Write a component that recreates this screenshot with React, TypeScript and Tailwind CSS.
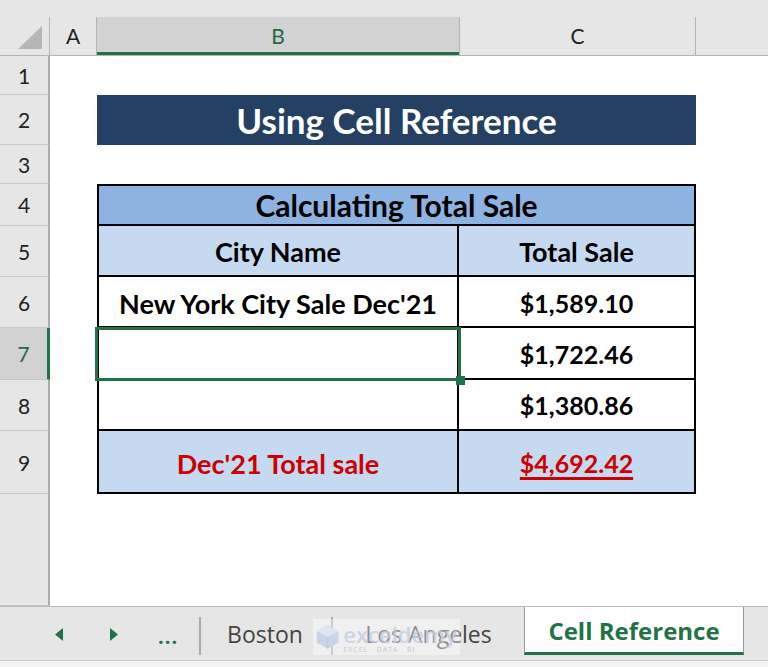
import React, { ReactNode } from "react";

const GREEN = "#217346";

const Row = ({
  n,
  h,
  active,
  children,
}: {
  n: number | string;
  h: string;
  active?: boolean;
  children?: ReactNode;
}) => (
  <div className={`${h} flex overflow-visible`}>
    <div
      className={`h-full w-[50px] shrink-0 flex items-center justify-center border-b border-[#c6c6c6] text-[21px] leading-none ${
        active
          ? "bg-[#d2d2d2] border-r-[3px] border-r-[#217346] text-[#1f6a42]"
          : "bg-[#e6e6e6] border-r-2 border-r-[#acacac] text-[#222]"
      }`}
    >
      {n}
    </div>
    <div className="flex-1 h-full bg-white pl-[47px] relative leading-none">{children}</div>
  </div>
);

const Tri = ({ dir }: { dir: "l" | "r" }) => (
  <svg width="8" height="13" viewBox="0 0 8 13">
    {dir === "l" ? <path d="M8 0 L8 13 L0 6.5 Z" fill={GREEN} /> : <path d="M0 0 L0 13 L8 6.5 Z" fill={GREEN} />}
  </svg>
);

export default function App() {
  return (
    <div className="w-[768px] h-[667px] overflow-hidden bg-[#e6e6e6] [font-family:Lato,'Liberation_Sans',sans-serif] relative">
      {/* top strip */}
      <div className="h-[17px] bg-[#e6e6e6]" />

      {/* column headers */}
      <div className="h-[39px] flex border-b border-[#b4b4b4] text-[21px] text-[#222]">
        <div className="w-[50px] shrink-0 border-r border-[#b4b4b4] flex items-end justify-end pr-[7px] pb-[6px]">
          <svg width="24" height="23" viewBox="0 0 24 23">
            <path d="M24 0 L24 23 L0 23 Z" fill="#b6b6b6" />
          </svg>
        </div>
        <div className="w-[47px] shrink-0 border-r border-[#b4b4b4] flex items-center justify-center">A</div>
        <div className="w-[362px] shrink-0 bg-[#d2d2d2] border-b-[3px] border-[#217346] flex items-center justify-center text-[#1f6a42] pt-[3px]">
          B
        </div>
        <div className="w-[237px] shrink-0 border-x border-[#b4b4b4] flex items-center justify-center">C</div>
        <div className="flex-1" />
      </div>

      {/* sheet rows */}
      <div className="flex flex-col">
        <Row n={1} h="h-[39px]" />

        <Row n={2} h="h-[50px]">
          <div className="w-[599px] h-full bg-[#244062] flex items-center justify-center text-white font-bold text-[35px]">
            Using Cell Reference
          </div>
        </Row>

        <Row n={3} h="h-[39px]" />

        <Row n={4} h="h-[42px]">
          <div className="w-[599px] h-full bg-[#8db3e2] border-2 border-black flex items-center justify-center font-bold text-[30px] text-black">
            Calculating Total Sale
          </div>
        </Row>

        <Row n={5} h="h-[51px]">
          <div className="w-[599px] h-full bg-[#c5d9f1] border-x-2 border-b-2 border-black flex font-bold text-[27px] text-black">
            <div className="w-[360px] border-r-2 border-black flex items-center justify-center pt-[2px]">City Name</div>
            <div className="flex-1 flex items-center justify-center pt-[2px]">Total Sale</div>
          </div>
        </Row>

        <Row n={6} h="h-[51px]">
          <div className="w-[599px] h-full border-x-2 border-b-2 border-black flex font-bold text-[27px] text-black">
            <div className="w-[360px] border-r-2 border-black flex items-center justify-center pt-[4px]">
              New York City Sale Dec'21
            </div>
            <div className="flex-1 flex items-center justify-center pt-[4px] text-[25px]">$1,589.10</div>
          </div>
        </Row>

        <Row n={7} h="h-[52px]" active>
          <div className="w-[599px] h-full border-x-2 border-b-2 border-black flex font-bold text-[25px] text-black">
            <div className="w-[360px] border-r-2 border-black" />
            <div className="flex-1 flex items-center justify-center pt-[2px]">$1,722.46</div>
          </div>
          {/* selection */}
          <div className="absolute z-10 left-[45px] top-[-1px] w-[366px] h-[54px] border-[3px] border-[#217346]" />
          <div className="absolute z-10 left-[406px] top-[48px] w-[9px] h-[9px] bg-[#217346]" />
        </Row>

        <Row n={8} h="h-[51px]">
          <div className="w-[599px] h-full border-x-2 border-b-2 border-black flex font-bold text-[25px] text-black">
            <div className="w-[360px] border-r-2 border-black" />
            <div className="flex-1 flex items-center justify-center pt-[2px]">$1,380.86</div>
          </div>
        </Row>

        <Row n={9} h="h-[63px]">
          <div className="w-[599px] h-full bg-[#c5d9f1] border-x-2 border-b-2 border-black flex font-bold text-[27px] text-[#cc0000]">
            <div className="w-[360px] border-r-2 border-black flex items-center justify-center pt-[4px]">
              Dec'21 Total sale
            </div>
            <div className="flex-1 flex items-center justify-center pt-[4px] text-[25px]">
              <span className="underline decoration-[3px] underline-offset-[4px]">$4,692.42</span>
            </div>
          </div>
        </Row>

        <Row n="" h="h-[112px]" />
      </div>

      {/* sheet tabs */}
      <div className="h-[55px] flex border-t border-[#b9b9b9] border-b border-b-[#c6c6c6] bg-[#e6e6e6] [font-family:'Open_Sans',sans-serif] text-[23px] text-[#444]">
        <div className="w-[199px] shrink-0 flex items-center pl-[55px] pt-[2px]">
          <Tri dir="l" />
          <div className="ml-[47px]">
            <Tri dir="r" />
          </div>
          <div className="ml-[40px] text-[#217346] font-bold text-[20px] tracking-[1px] pt-[4px]">...</div>
        </div>
        <div className="w-[2px] h-[38px] bg-[#a8a8a8] self-center mt-[4px]" />
        <div className="w-[130px] flex items-center justify-center pt-[2px] pr-[2px]">Boston</div>
        <div className="w-[2px] h-[38px] bg-[#a8a8a8] self-center mt-[4px]" />
        <div className="w-[191px] flex items-center justify-center pt-[2px]">Los Angeles</div>
        <div className="w-[220px] h-[48px] bg-white border-x border-[#9a9a9a] border-b-[3px] border-b-[#217346] flex items-center justify-center font-bold text-[24px] text-[#217346] pt-[2px]">
          Cell Reference
        </div>
        <div className="flex-1" />
      </div>
      <div className="h-[6px] bg-[#f3f3f3]" />

      {/* watermark */}
      <div className="absolute left-[313px] top-[619px] h-[36px] w-[147px] bg-white/40 flex items-center gap-[4px] px-[3px] pointer-events-none">
        <svg width="28" height="30" viewBox="0 0 28 30">
          <path d="M14 1 L27 8 L27 22 L14 29 L1 22 L1 8 Z" fill="#c9d6ea" />
          <path d="M14 1 L27 8 L14 15 L1 8 Z" fill="#dde6f3" />
          <path d="M14 15 L14 29" stroke="#b9c8e0" strokeWidth="1" />
        </svg>
        <div className="flex flex-col leading-none">
          <span className="[font-family:'Open_Sans',sans-serif] text-[22px] text-[#c3cde0]/80 font-semibold leading-[24px]">
            exceldemy
          </span>
          <span className="[font-family:'Open_Sans',sans-serif] text-[7px] tracking-[1px] text-[#c9c9c9]">EXCEL · DATA · BI</span>
        </div>
      </div>
    </div>
  );
}
